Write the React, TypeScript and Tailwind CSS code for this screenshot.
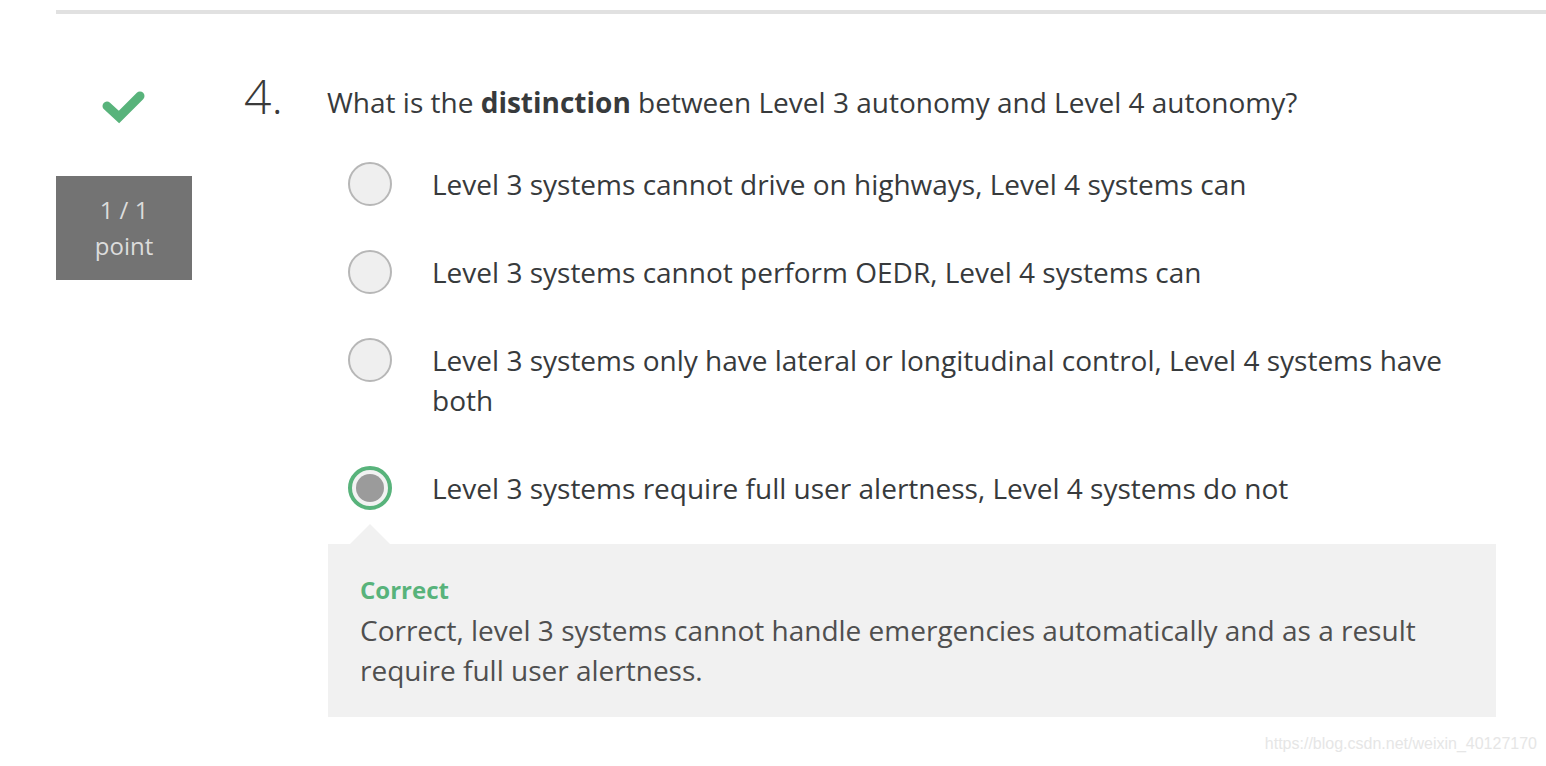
import React from 'react';

const options = [
  { text: 'Level 3 systems cannot drive on highways, Level 4 systems can', selected: false },
  { text: 'Level 3 systems cannot perform OEDR, Level 4 systems can', selected: false },
  { text: 'Level 3 systems only have lateral or longitudinal control, Level 4 systems have both', selected: false },
  { text: 'Level 3 systems require full user alertness, Level 4 systems do not', selected: true },
];

const Radio: React.FC<{ selected: boolean }> = ({ selected }) =>
  selected ? (
    <div className="w-[44px] h-[44px] rounded-full border-[4px] border-[#58b37b] bg-[#f2f2f2] flex items-center justify-center shrink-0">
      <div className="w-[28px] h-[28px] rounded-full bg-[#9b9b9b]" />
    </div>
  ) : (
    <div className="w-[44px] h-[44px] rounded-full border-2 border-[#b7b7b7] bg-[#efefef] shrink-0" />
  );

const App: React.FC = () => {
  return (
    <div className="relative w-full h-[766px] bg-white overflow-hidden text-[#373a3c] font-['Open_Sans',sans-serif]">
      <div className="ml-[56px] mt-[10px] h-[4px] bg-[#e1e1e1]" />

      <div className="flex pt-[68px]">
        {/* score column */}
        <div className="ml-[56px] w-[136px] flex flex-col items-center shrink-0">
          <svg width="44" height="34" viewBox="0 0 44 34" className="mt-[8px]">
            <polyline
              points="5,16 17,27 38,6"
              fill="none"
              stroke="#58b37b"
              strokeWidth="9"
              strokeLinecap="round"
              strokeLinejoin="miter"
            />
          </svg>
          <div className="mt-[52px] w-[136px] h-[104px] bg-[#737373] flex flex-col items-center justify-center text-[24px] leading-[36px] text-[#dcdcdc]">
            <span>1 / 1</span>
            <span>point</span>
          </div>
        </div>

        {/* question number */}
        <div className="ml-[52px] w-[83px] shrink-0 -mt-[10px] text-[48px] leading-[48px] font-light text-[#3a3a3a]">
          4.
        </div>

        {/* question body */}
        <div className="w-[1169px] shrink-0">
          <p className="text-[28px] leading-[40px]">
            What is the <b className="font-bold">distinction</b> between Level 3 autonomy and Level 4 autonomy?
          </p>

          <div className="mt-[42px] flex flex-col gap-[48px]">
            {options.map((o) => (
              <div key={o.text} className="flex items-start">
                <div className="ml-[21px] h-[40px] flex items-center">
                  <Radio selected={o.selected} />
                </div>
                <p className="ml-[40px] flex-1 text-[28px] leading-[40px]">{o.text}</p>
              </div>
            ))}
          </div>

          <div className="mt-[16px] ml-[1px]">
            <div className="ml-[22px] w-0 h-0 border-l-[20px] border-r-[20px] border-b-[20px] border-l-transparent border-r-transparent border-b-[#f1f1f1]" />
            <div className="bg-[#f1f1f1] pl-[32px] pr-[32px] pt-[28px] pb-[27px]">
              <div className="text-[24px] leading-[36px] font-bold text-[#58b37b]">Correct</div>
              <p className="mt-[2px] text-[28px] leading-[40px] text-[#4f4f4f]">
                Correct, level 3 systems cannot handle emergencies automatically and as a result require full user alertness.
              </p>
            </div>
          </div>
        </div>
      </div>

      <div className="absolute right-[9px] bottom-[10px] text-[16px] text-[#e6e6e6] font-['Liberation_Sans',sans-serif]">
        https://blog.csdn.net/weixin_40127170
      </div>
    </div>
  );
};

export default App;
